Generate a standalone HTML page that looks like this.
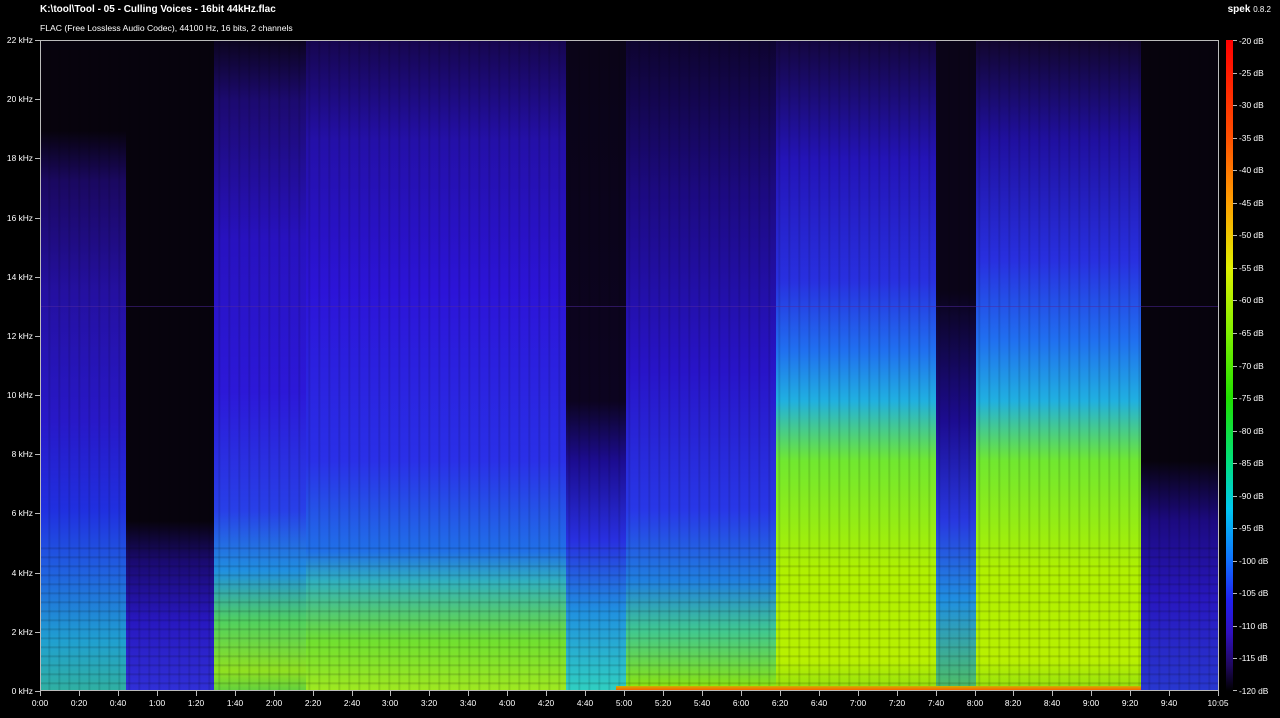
<!DOCTYPE html>
<html><head><meta charset="utf-8"><style>
*{margin:0;padding:0;box-sizing:border-box}
body{width:1280px;height:718px;background:#000;position:relative;overflow:hidden;font-family:"Liberation Sans",Arial,sans-serif;color:#fff}
.t1{position:absolute;left:40px;top:4px;font-size:10px;font-weight:bold}
.t2{position:absolute;left:40px;top:23px;font-size:8.6px}
.spek{position:absolute;right:9px;top:4px;font-size:10px}
.spek b{font-weight:bold}.spek span{font-size:8px}
#plot{position:absolute;left:40px;top:40px;width:1179px;height:651px;background:#07030d;overflow:hidden;border:1px solid #bbb}
#plot div{position:absolute}
.yl{position:absolute;right:1247px;font-size:8.4px;transform:translateY(-50%);white-space:nowrap}
.yt{position:absolute;left:35px;width:5px;height:1px;background:#bbb}
.xl{position:absolute;top:698px;font-size:8.4px;transform:translateX(-50%)}
.xt{position:absolute;top:691px;width:1px;height:5px;background:#bbb}
.dl{position:absolute;left:1239px;font-size:8.4px;transform:translateY(-50%)}
.dt{position:absolute;left:1233px;width:4px;height:1px;background:#bbb}
#bar{position:absolute;left:1226px;top:40px;width:7px;height:651px;background:linear-gradient(#ff0000 0%,#ff5000 15%,#ffa000 25%,#e0f000 35%,#80f000 45%,#20e000 55%,#00e080 65%,#00c8f0 72%,#1070ff 80%,#2020f0 86%,#3010c0 91%,#200860 96%,#000 100%)}
</style></head><body>
<div class="t1">K:\tool\Tool - 05 - Culling Voices - 16bit 44kHz.flac</div>
<div class="t2">FLAC (Free Lossless Audio Codec), 44100 Hz, 16 bits, 2 channels</div>
<div class="spek"><b>spek</b> <span>0.8.2</span></div>
<div id="plot">
<div style="left:0;top:0;width:85px;height:651px;background:linear-gradient(#07030d 0px,#07030d 90px,#1a0860 140px,#2410a0 250px,#2818c8 380px,#2030e0 470px,#2060e0 530px,#20a0d0 600px,#30b0a0 651px)"></div>
<div style="left:85px;top:0;width:88px;height:651px;background:linear-gradient(#07030d 0px,#07030d 480px,#1a0a70 520px,#2818c0 580px,#3030d8 651px)"></div>
<div style="left:173px;top:0;width:92px;height:651px;background:linear-gradient(#0c0420 0px,#1c0a70 60px,#2812c0 200px,#2c18d8 350px,#2840e8 470px,#2090e0 530px,#50d060 580px,#90e020 630px,#60d040 651px)"></div>
<div style="left:265px;top:0;width:260px;height:651px;background:linear-gradient(#160650 0px,#2410a8 100px,#2c14d8 250px,#2a30e8 420px,#2070e8 510px,#30b0c0 540px,#70e030 600px,#a0e820 651px)"></div>
<div style="left:525px;top:0;width:60px;height:651px;background:linear-gradient(#0a0418 0px,#0c0420 360px,#1c0c90 420px,#2830e0 500px,#2090e0 570px,#30d0c0 651px)"></div>
<div style="left:585px;top:0;width:150px;height:651px;background:linear-gradient(#0e0430 0px,#1c0a80 150px,#2814c8 330px,#2838e8 470px,#2080e0 540px,#40c890 590px,#80e020 640px,#a0f000 651px)"></div>
<div style="left:735px;top:0;width:160px;height:651px;background:linear-gradient(#140640 0px,#2414b8 120px,#2830e0 240px,#2070f0 310px,#20b0e0 360px,#70e830 420px,#b0f000 530px,#b8f000 620px,#90e010 651px)"></div>
<div style="left:895px;top:0;width:40px;height:651px;background:linear-gradient(#0a0418 0px,#0a0418 250px,#1c0c90 380px,#2838e0 480px,#2090e0 560px,#50c060 651px)"></div>
<div style="left:935px;top:0;width:165px;height:651px;background:linear-gradient(#120630 0px,#2010a0 100px,#2830e0 220px,#2070f0 300px,#20b0e0 360px,#70e830 420px,#b0f000 530px,#b8f000 620px,#90e010 651px)"></div>
<div style="left:1100px;top:0;width:79px;height:651px;background:linear-gradient(#07030d 0px,#07030d 420px,#1c0a80 480px,#2818c0 560px,#2838d0 651px)"></div>
<div style="left:0;top:0;width:1179px;height:651px;background:repeating-linear-gradient(90deg,rgba(0,0,0,0) 0,rgba(0,0,0,0) 7px,rgba(0,0,0,.15) 8px,rgba(0,0,0,0) 10px)"></div>
<div style="left:0;top:500px;width:1179px;height:151px;background:repeating-linear-gradient(180deg,rgba(0,0,0,0) 0,rgba(0,0,0,0) 6px,rgba(0,0,0,.18) 7px,rgba(0,0,0,0) 9px)"></div>
<div style="left:575px;top:645px;width:525px;height:5px;background:linear-gradient(#d0b000,#ff5000)"></div>
<div style="left:0;top:265px;width:1179px;height:1px;background:rgba(80,40,160,.5)"></div>
</div>
<div id="bar"></div>
<span class="yl" style="top:40px">22 kHz</span><span class="yl" style="top:99px">20 kHz</span><span class="yl" style="top:158px">18 kHz</span><span class="yl" style="top:218px">16 kHz</span><span class="yl" style="top:277px">14 kHz</span><span class="yl" style="top:336px">12 kHz</span><span class="yl" style="top:395px">10 kHz</span><span class="yl" style="top:454px">8 kHz</span><span class="yl" style="top:513px">6 kHz</span><span class="yl" style="top:573px">4 kHz</span><span class="yl" style="top:632px">2 kHz</span><span class="yl" style="top:691px">0 kHz</span>
<div class="yt" style="top:40px"></div><div class="yt" style="top:99px"></div><div class="yt" style="top:158px"></div><div class="yt" style="top:218px"></div><div class="yt" style="top:277px"></div><div class="yt" style="top:336px"></div><div class="yt" style="top:395px"></div><div class="yt" style="top:454px"></div><div class="yt" style="top:513px"></div><div class="yt" style="top:573px"></div><div class="yt" style="top:632px"></div><div class="yt" style="top:691px"></div>
<span class="xl" style="left:40px">0:00</span><span class="xl" style="left:79px">0:20</span><span class="xl" style="left:118px">0:40</span><span class="xl" style="left:157px">1:00</span><span class="xl" style="left:196px">1:20</span><span class="xl" style="left:235px">1:40</span><span class="xl" style="left:274px">2:00</span><span class="xl" style="left:313px">2:20</span><span class="xl" style="left:352px">2:40</span><span class="xl" style="left:390px">3:00</span><span class="xl" style="left:429px">3:20</span><span class="xl" style="left:468px">3:40</span><span class="xl" style="left:507px">4:00</span><span class="xl" style="left:546px">4:20</span><span class="xl" style="left:585px">4:40</span><span class="xl" style="left:624px">5:00</span><span class="xl" style="left:663px">5:20</span><span class="xl" style="left:702px">5:40</span><span class="xl" style="left:741px">6:00</span><span class="xl" style="left:780px">6:20</span><span class="xl" style="left:819px">6:40</span><span class="xl" style="left:858px">7:00</span><span class="xl" style="left:897px">7:20</span><span class="xl" style="left:936px">7:40</span><span class="xl" style="left:975px">8:00</span><span class="xl" style="left:1013px">8:20</span><span class="xl" style="left:1052px">8:40</span><span class="xl" style="left:1091px">9:00</span><span class="xl" style="left:1130px">9:20</span><span class="xl" style="left:1169px">9:40</span><span class="xl" style="left:1218px">10:05</span>
<div class="xt" style="left:40px"></div><div class="xt" style="left:79px"></div><div class="xt" style="left:118px"></div><div class="xt" style="left:157px"></div><div class="xt" style="left:196px"></div><div class="xt" style="left:235px"></div><div class="xt" style="left:274px"></div><div class="xt" style="left:313px"></div><div class="xt" style="left:352px"></div><div class="xt" style="left:390px"></div><div class="xt" style="left:429px"></div><div class="xt" style="left:468px"></div><div class="xt" style="left:507px"></div><div class="xt" style="left:546px"></div><div class="xt" style="left:585px"></div><div class="xt" style="left:624px"></div><div class="xt" style="left:663px"></div><div class="xt" style="left:702px"></div><div class="xt" style="left:741px"></div><div class="xt" style="left:780px"></div><div class="xt" style="left:819px"></div><div class="xt" style="left:858px"></div><div class="xt" style="left:897px"></div><div class="xt" style="left:936px"></div><div class="xt" style="left:975px"></div><div class="xt" style="left:1013px"></div><div class="xt" style="left:1052px"></div><div class="xt" style="left:1091px"></div><div class="xt" style="left:1130px"></div><div class="xt" style="left:1169px"></div><div class="xt" style="left:1218px"></div>
<span class="dl" style="top:41px">-20 dB</span><span class="dl" style="top:73px">-25 dB</span><span class="dl" style="top:105px">-30 dB</span><span class="dl" style="top:138px">-35 dB</span><span class="dl" style="top:170px">-40 dB</span><span class="dl" style="top:203px">-45 dB</span><span class="dl" style="top:235px">-50 dB</span><span class="dl" style="top:268px">-55 dB</span><span class="dl" style="top:300px">-60 dB</span><span class="dl" style="top:333px">-65 dB</span><span class="dl" style="top:366px">-70 dB</span><span class="dl" style="top:398px">-75 dB</span><span class="dl" style="top:431px">-80 dB</span><span class="dl" style="top:463px">-85 dB</span><span class="dl" style="top:496px">-90 dB</span><span class="dl" style="top:528px">-95 dB</span><span class="dl" style="top:561px">-100 dB</span><span class="dl" style="top:593px">-105 dB</span><span class="dl" style="top:626px">-110 dB</span><span class="dl" style="top:658px">-115 dB</span><span class="dl" style="top:691px">-120 dB</span>
<div class="dt" style="top:40px"></div><div class="dt" style="top:73px"></div><div class="dt" style="top:105px"></div><div class="dt" style="top:138px"></div><div class="dt" style="top:170px"></div><div class="dt" style="top:203px"></div><div class="dt" style="top:235px"></div><div class="dt" style="top:268px"></div><div class="dt" style="top:300px"></div><div class="dt" style="top:333px"></div><div class="dt" style="top:366px"></div><div class="dt" style="top:398px"></div><div class="dt" style="top:431px"></div><div class="dt" style="top:463px"></div><div class="dt" style="top:496px"></div><div class="dt" style="top:528px"></div><div class="dt" style="top:561px"></div><div class="dt" style="top:593px"></div><div class="dt" style="top:626px"></div><div class="dt" style="top:658px"></div><div class="dt" style="top:690px"></div>
</body></html>
